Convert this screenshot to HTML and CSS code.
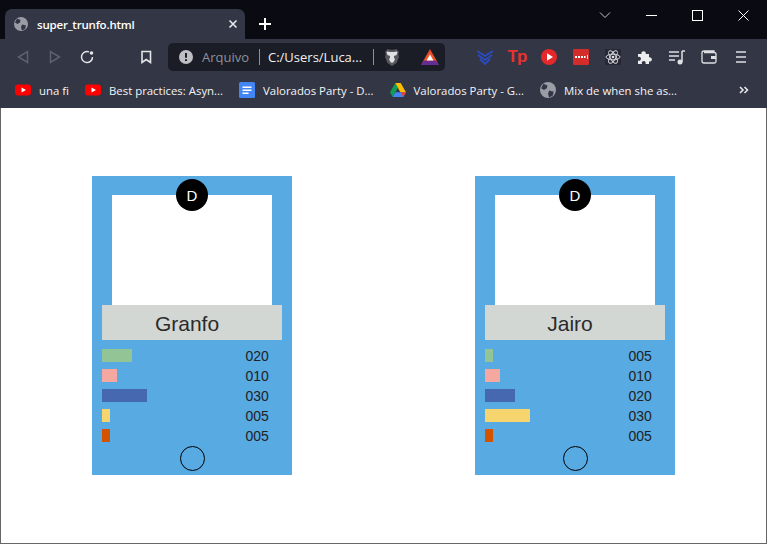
FILE: index.html
```html
<!DOCTYPE html>
<html lang="pt-BR">
<head>
  <meta charset="UTF-8" />
  <title>super_trunfo.html</title>
  <link rel="stylesheet" href="styles.css">
</head>
<body>

<!-- Barra de abas -->
<div class="titlebar">
    <div class="tab">
        <svg class="globe" viewBox="0 0 14 14"><circle cx="7" cy="7" r="7" fill="#9a9da6"/><path d="M3 1.500 6.500 3 6 5.500 3.500 7 1 5.500ZM8 7.500l4 1-1 3.500-3 1.500-1-3Z" fill="#333644"/></svg>
        <span class="tab-title">super_trunfo.html</span>
        <svg class="tab-close" viewBox="0 0 10 10"><path d="M1.500 1.500l7 7M8.500 1.500l-7 7" stroke="#e8e9ec" stroke-width="1.600"/></svg>
    </div>
    <svg class="new-tab" viewBox="0 0 12 12"><path d="M6 0v12M0 6h12" stroke="#fff" stroke-width="2"/></svg>
    <div class="window-controls">
        <div class="win-btn"><svg width="12" height="8" viewBox="0 0 12 8"><path d="M1 1.500l5 5 5-5" fill="none" stroke="#c4c5c9"/></svg></div>
        <div class="win-btn"><svg width="11" height="11" viewBox="0 0 11 11"><path d="M0 5.500h11" stroke="#fff"/></svg></div>
        <div class="win-btn"><svg width="11" height="11" viewBox="0 0 11 11"><rect x=".5" y=".5" width="10" height="10" fill="none" stroke="#fff"/></svg></div>
        <div class="win-btn"><svg width="11" height="11" viewBox="0 0 11 11"><path d="M.5.5l10 10M10.500.5l-10 10" stroke="#fff"/></svg></div>
    </div>
</div>

<!-- Barra de endereco -->
<div class="toolbar">
    <div class="nav-btn"><svg width="12" height="14" viewBox="0 0 12 14"><path d="M10.500 1.500v11L1.500 7Z" fill="none" stroke="#5f626e" stroke-width="1.500"/></svg></div>
    <div class="nav-btn"><svg width="12" height="14" viewBox="0 0 12 14"><path d="M1.500 1.500v11l9-5.500Z" fill="none" stroke="#5f626e" stroke-width="1.500"/></svg></div>
    <div class="nav-btn"><svg width="14" height="14" viewBox="0 0 14 14"><path d="M12.500 7A5.500 5.500 0 1 1 9 1.900" fill="none" stroke="#e4e5e8" stroke-width="1.500"/><circle cx="11.500" cy="3" r="1.800" fill="#e4e5e8"/></svg></div>
    <div class="nav-btn bookmark"><svg width="12" height="14" viewBox="0 0 12 14"><path d="M2 1.500h8.500v11L6.200 9.500 2 12.500Z" fill="none" stroke="#e4e5e8" stroke-width="1.600"/></svg></div>
    <div class="omnibox">
        <svg class="info" viewBox="0 0 14 14"><circle cx="7" cy="7" r="7" fill="#bdbfc4"/><path d="M7 3v4.800M7 9.300v1.700" stroke="#1a1c26" stroke-width="2"/></svg>
        <span class="omni-scheme">Arquivo</span>
        <span class="omni-sep"></span>
        <span class="omni-url">C:/Users/Luca...</span>
        <span class="omni-sep"></span>
        <svg class="lion" viewBox="0 0 16 18"><path d="M3.500 1 6 1.800h4L12.500 1 15 4l-.7 2.300L15 9l-2.500 6L8 18l-4.500-3L1 9l.7-2.700L1 4Z" fill="#55575f"/><path d="M3.500 3.500 6 4h4l2.500-.5 1 1-1 2.500-2.500 1v2l1 1-1 2.500-2 1.500-2-1.500-1-2.500 1-1V8L3.500 7l-1-2.500Z" fill="#e0e1e4"/></svg>
        <svg class="bat" viewBox="0 0 18 16"><defs><linearGradient id="batFill" x1="0" y1="0" x2="0" y2="1"><stop offset="0" stop-color="#e8452a"/><stop offset=".7" stop-color="#ef5a2a"/><stop offset="1" stop-color="#662d91"/></linearGradient></defs><path d="M9 0l9 16H0Z" fill="url(#batFill)"/><path d="M0 16l3.200-4.500h11.600L18 16Z" fill="#662d91"/><path d="M9 5.500l3.400 6H5.600Z" fill="#fff"/></svg>
    </div>
    <div class="extensions">
        <div class="ext"><svg width="16" height="15" viewBox="0 0 16 15"><path d="M0 1l8 5 8-5M1 5l7 5 7-5M3 9l5 5 5-5" fill="none" stroke="#2b4bc4" stroke-width="1.800"/></svg></div>
        <div class="ext"><span class="tp-logo">Tp</span></div>
        <div class="ext"><svg width="16" height="16" viewBox="0 0 16 16"><circle cx="8" cy="8" r="8" fill="#e5282a"/><path d="M6 4.200v7.600L12 8Z" fill="#fff"/></svg></div>
        <div class="ext"><svg width="16" height="16" viewBox="0 0 16 16"><rect width="16" height="16" rx="1" fill="#d22d2b"/><path d="M2 7h2v2H2zM5 7h2v2H5zM8 7h2v2H8zM11 7h1.500v2H11zM14 6h.8v4H14z" fill="#fff"/></svg></div>
        <div class="ext"><svg width="16" height="16" viewBox="0 0 16 16"><rect width="16" height="16" fill="#262935"/><g fill="none" stroke="#dfe0e3" stroke-width=".9"><ellipse cx="8" cy="8" rx="7" ry="2.800"/><ellipse cx="8" cy="8" rx="7" ry="2.800" transform="rotate(60 8 8)"/><ellipse cx="8" cy="8" rx="7" ry="2.800" transform="rotate(120 8 8)"/></g><circle cx="8" cy="8" r="1.300" fill="#dfe0e3"/></svg></div>
        <div class="ext"><svg width="16" height="16" viewBox="0 0 16 16"><path d="M1 5h3.500a2.200 2.200 0 1 1 4.200 0H12v3.300a2.200 2.200 0 1 1 0 4.200V15H8.500a2 2 0 1 0-3.500 0H1v-3.500a2 2 0 1 0 0-3.500Z" fill="#eceded"/></svg></div>
        <div class="ext"><svg width="16" height="15" viewBox="0 0 16 15"><path d="M0 2h10M0 6h10M0 10h6" stroke="#dfe0e3" stroke-width="1.400"/><path d="M13 1v11" stroke="#dfe0e3" stroke-width="1.500"/><path d="M13 1h3" stroke="#dfe0e3" stroke-width="1.500"/><circle cx="11" cy="12" r="2.500" fill="#dfe0e3"/></svg></div>
        <div class="ext"><svg width="16" height="14" viewBox="0 0 16 14"><path d="M13 2.500V1H3a2 2 0 0 0-2 2v8a2 2 0 0 0 2 2h10.500a1.500 1.500 0 0 0 1.500-1.500V4a1.500 1.500 0 0 0-1.500-1.500H3" fill="none" stroke="#dfe0e3" stroke-width="1.300"/><rect x="10" y="6" width="5" height="3" fill="#dfe0e3"/></svg></div>
        <div class="ext"><svg width="10" height="12" viewBox="0 0 10 12"><path d="M0 1h10M0 6h10M0 11h10" stroke="#dfe0e3" stroke-width="1.600"/></svg></div>
    </div>
</div>

<!-- Favoritos -->
<div class="bookmarks">
    <div class="bm">
        <svg class="bm-icon" viewBox="0 0 16 12"><rect width="16" height="11" y=".5" rx="3" fill="#f00"/><path d="M6.500 3.500v5L11 6Z" fill="#fff"/></svg>
        <span>una fi</span>
    </div>
    <div class="bm">
        <svg class="bm-icon" viewBox="0 0 16 12"><rect width="16" height="11" y=".5" rx="3" fill="#f00"/><path d="M6.500 3.500v5L11 6Z" fill="#fff"/></svg>
        <span>Best practices: Asyn...</span>
    </div>
    <div class="bm">
        <svg class="bm-icon" viewBox="0 0 16 16"><rect width="16" height="16" rx="1.500" fill="#4285f4"/><path d="M3.500 4.500h9v1.500h-9zM3.500 7.500h9V9h-9zM3.500 10.500h6V12h-6z" fill="#fff"/></svg>
        <span>Valorados Party - D...</span>
    </div>
    <div class="bm">
        <svg class="bm-icon" viewBox="0 0 16 14"><path d="M5.300 0 0 9.300 2.700 14l5.200-9.200Z" fill="#0f9d58"/><path d="M10.700 0H5.300l5 9.300H16Z" fill="#fbbc04"/><path d="M5.400 9.300 2.700 14h10.600l2.700-4.700Z" fill="#4285f4"/><path d="M13.300 14 16 9.300h-5.500l2.800 4.700Z" fill="#ea4335"/></svg>
        <span>Valorados Party - G...</span>
    </div>
    <div class="bm">
        <svg class="bm-icon" viewBox="0 0 14 14"><circle cx="7" cy="7" r="7" fill="#9a9da6"/><path d="M3 1.500 6.500 3 6 5.500 3.500 7 1 5.500ZM8 7.500l4 1-1 3.500-3 1.500-1-3Z" fill="#333644"/></svg>
        <span>Mix de when she as...</span>
    </div>
    <svg class="bm-more" viewBox="0 0 10 8"><path d="M1 1l3 3-3 3M5.500 1l3 3-3 3" fill="none" stroke="#e4e5e8" stroke-width="1.600"/></svg>
</div>

<!-- Pagina -->
<div class="page">
    <div class="card">
        <div class="badge">D</div>
        <div class="picture"></div>
        <div class="name">Granfo</div>
        <div class="stats">
            <div class="stat"><div class="track"><div class="bar green" style="width:30px"></div></div><span>020</span></div>
            <div class="stat"><div class="track"><div class="bar pink" style="width:15px"></div></div><span>010</span></div>
            <div class="stat"><div class="track"><div class="bar blue" style="width:45px"></div></div><span>030</span></div>
            <div class="stat"><div class="track"><div class="bar yellow" style="width:8px"></div></div><span>005</span></div>
            <div class="stat"><div class="track"><div class="bar orange" style="width:8px"></div></div><span>005</span></div>
        </div>
        <div class="ring"></div>
    </div>
    <div class="card">
        <div class="badge">D</div>
        <div class="picture"></div>
        <div class="name">Jairo</div>
        <div class="stats">
            <div class="stat"><div class="track"><div class="bar green" style="width:8px"></div></div><span>005</span></div>
            <div class="stat"><div class="track"><div class="bar pink" style="width:15px"></div></div><span>010</span></div>
            <div class="stat"><div class="track"><div class="bar blue" style="width:30px"></div></div><span>020</span></div>
            <div class="stat"><div class="track"><div class="bar yellow" style="width:45px"></div></div><span>030</span></div>
            <div class="stat"><div class="track"><div class="bar orange" style="width:8px"></div></div><span>005</span></div>
        </div>
        <div class="ring"></div>
    </div>
</div>

</body>
</html>
```

FILE: styles.css
```css
* {
    box-sizing: border-box;
}
html, body {
    height: 100%;
}
body {
    margin: 0;
    display: flex;
    flex-direction: column;
    overflow: hidden;
    background: #fff;
    font-family: "Open Sans", "Liberation Sans", sans-serif;
}

/* barra de abas */
.titlebar {
    display: flex;
    align-items: flex-end;
    height: 39px;
    padding-left: 5px;
    background: #0a0b12;
}
.tab {
    display: flex;
    align-items: center;
    width: 240px;
    height: 30px;
    padding: 0 7px 0 9px;
    background: #333644;
    border-radius: 7px 7px 0 0;
    color: #fff;
}
.globe {
    width: 14px;
    height: 14px;
}
.tab-title {
    flex: 1;
    margin-left: 9px;
    font-size: 11.5px;
    font-weight: 600;
    letter-spacing: -0.2px;
}
.tab-close {
    width: 10px;
    height: 10px;
}
.new-tab {
    width: 12px;
    height: 12px;
    margin: 0 0 9px 14px;
}
.window-controls {
    display: flex;
    align-self: flex-start;
    margin-left: auto;
    margin-right: 1px;
}
.win-btn {
    display: flex;
    align-items: center;
    justify-content: center;
    width: 46px;
    height: 30px;
}

/* barra de endereco */
.toolbar {
    display: flex;
    align-items: center;
    height: 33px;
    padding: 4px 0 1px 7px;
    background: #333644;
}
.nav-btn {
    display: flex;
    align-items: center;
    justify-content: center;
    width: 32px;
}
.bookmark {
    margin-left: 27px;
    margin-right: 6px;
}
.omnibox {
    display: flex;
    align-items: center;
    width: 277px;
    height: 28px;
    padding-left: 11px;
    background: #1a1c26;
    border-radius: 5px;
}
.info {
    width: 14px;
    height: 14px;
}
.omni-scheme {
    width: 57px;
    margin-left: 9px;
    font-size: 13px;
    color: #8f919a;
}
.omni-sep {
    width: 1px;
    height: 16px;
    background: #8f919a;
}
.omni-url {
    width: 105px;
    margin-left: 8px;
    font-size: 13px;
    color: #f1f1f3;
    white-space: nowrap;
}
.lion {
    width: 16px;
    height: 18px;
    margin-left: 10px;
}
.bat {
    width: 18px;
    height: 16px;
    margin-left: 21px;
}
.extensions {
    display: flex;
    margin-left: 24px;
}
.ext {
    display: flex;
    align-items: center;
    justify-content: center;
    width: 32px;
    height: 20px;
}
.tp-logo {
    font-family: "Liberation Sans", sans-serif;
    font-size: 17px;
    font-weight: bold;
    letter-spacing: -1px;
    color: #e8322f;
}

/* favoritos */
.bookmarks {
    display: flex;
    align-items: center;
    gap: 16px;
    height: 36px;
    padding: 0 18px 0 15px;
    background: #333644;
    font-size: 11.4px;
    color: #f4f4f6;
}
.bm {
    display: flex;
    align-items: center;
    gap: 8px;
    white-space: nowrap;
}
.bm-icon {
    width: 16px;
    height: 16px;
}
.bm-more {
    width: 10px;
    height: 8px;
    margin-left: auto;
}

/* pagina */
.page {
    flex: 1;
    display: flex;
    justify-content: center;
    align-items: flex-start;
    gap: 183px;
    padding-top: 68px;
    background: #fff;
    border: 1px solid #666;
    border-top: none;
}
.card {
    position: relative;
    display: flex;
    flex-direction: column;
    align-items: center;
    width: 200px;
    height: 299px;
    padding-top: 19px;
    background: #58aae2;
    font-family: "Liberation Sans", sans-serif;
}
.badge {
    position: absolute;
    top: 3px;
    left: 84px;
    display: flex;
    align-items: center;
    justify-content: center;
    width: 32px;
    height: 32px;
    background: #000;
    border-radius: 50%;
    color: #fff;
    font-size: 15px;
}
.picture {
    width: 160px;
    height: 110px;
    background: #fff;
}
.name {
    width: 180px;
    height: 35px;
    padding-right: 10px;
    background: #d3d7d4;
    color: #2b2b2b;
    font-size: 21px;
    line-height: 38px;
    text-align: center;
}
.stats {
    display: flex;
    flex-direction: column;
    gap: 7px;
    width: 100%;
    margin-top: 9px;
    padding-left: 10px;
}
.stat {
    display: flex;
    align-items: center;
    height: 13px;
    font-size: 14px;
    color: #222;
}
.track {
    width: 143.5px;
}
.bar {
    height: 13px;
}
.green { background: #93c495; }
.pink { background: #f4a8a0; }
.blue { background: #4668b0; }
.yellow { background: #f7d56e; }
.orange { background: #d35400; }
.ring {
    width: 25px;
    height: 25px;
    margin-top: 4px;
    border: 1px solid #000;
    border-radius: 50%;
}
```
